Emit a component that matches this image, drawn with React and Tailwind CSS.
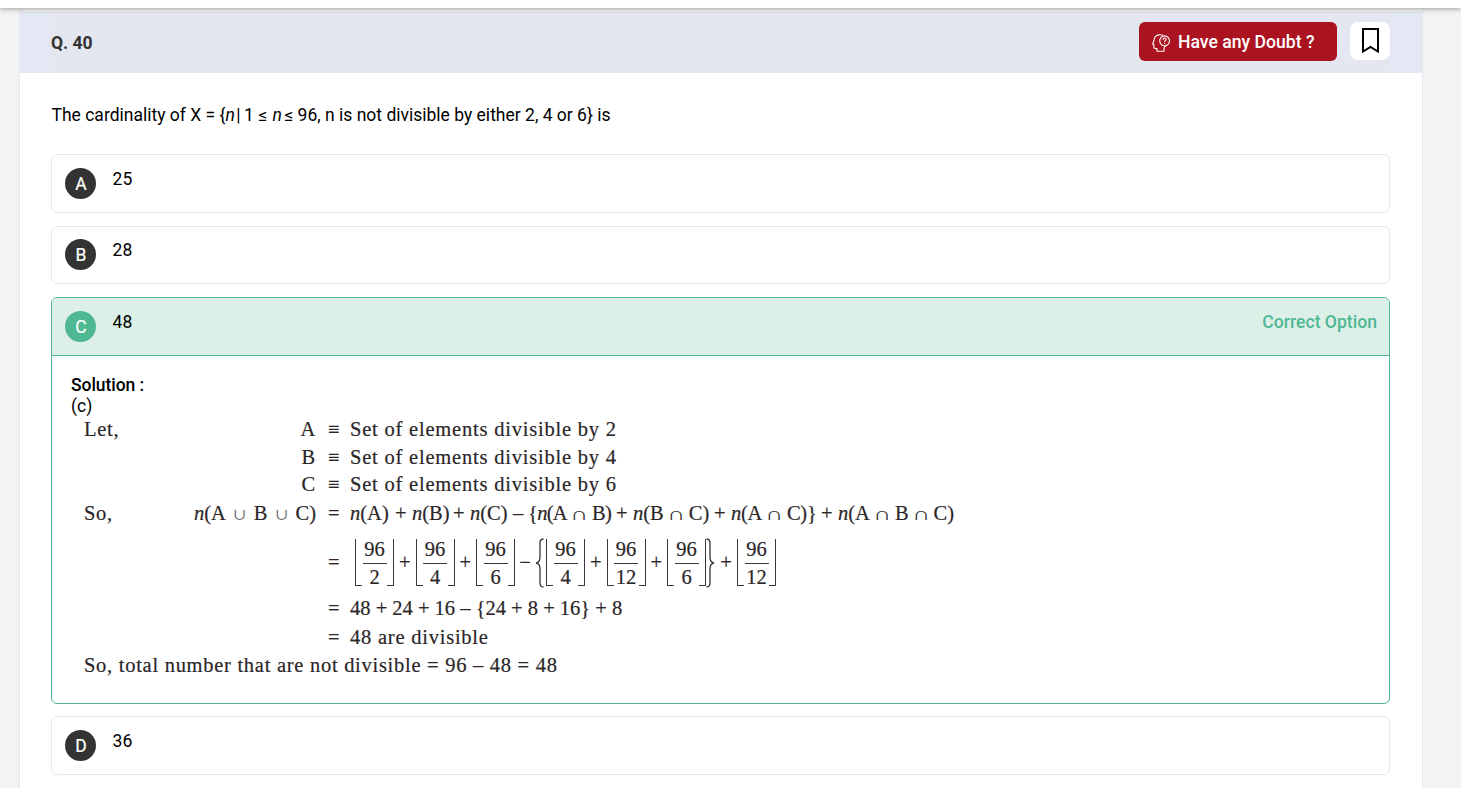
import React from "react";

function Option({ letter, value, className = "", pad = "pt-[13px]" }) {
  return (
    <div className={`flex rounded-md border border-[#e9e9ec] bg-white pl-[13px] ${pad} ${className}`}>
      <Badge letter={letter} className="bg-[#333333]" />
      <span className="ml-[16.6px] mt-px h-[21px] text-[17.5px] leading-[21px]">{value}</span>
    </div>
  );
}

function Badge({ letter, className }) {
  return (
    <span className={`flex size-[31px] shrink-0 items-center justify-center rounded-full text-[17.5px] leading-none text-white [-webkit-text-stroke:0.2px_white] ${className}`}>
      <span className="mt-[3px] pl-px">{letter}</span>
    </span>
  );
}

function N() {
  return <i>n</i>;
}

function Cap() {
  return <span className="mx-[5px] inline-block w-[15px] scale-x-[1.4] text-center text-[18px] leading-none tracking-normal [-webkit-text-stroke:0px]">∩</span>;
}

function Cup() {
  return <span className="mx-[6.5px] inline-block w-[15px] scale-x-[1.25] text-center font-['DejaVu_Sans',sans-serif] text-[18px] leading-none tracking-normal [-webkit-text-stroke:0.7px_white]">∪</span>;
}

function Tok({ className, children }) {
  return <span className={`inline-block shrink-0 whitespace-nowrap ${className}`}>{children}</span>;
}

function Line({ label, lhs, op = "=", children, className = "" }) {
  return (
    <div className={`flex items-center whitespace-nowrap ${className}`}>
      <span className="w-[90px] tracking-[0.7px]">{label}</span>
      <span className="flex w-[142px] justify-end">{lhs}</span>
      <span className="ml-[12px] w-[22px]">{op}</span>
      <span className="flex items-center">{children}</span>
    </div>
  );
}

function Floor({ top, bottom }) {
  return (
    <span className="flex h-[47px] w-[39px] shrink-0 justify-between">
      <span className="w-[7px] border-b border-l border-[#3b3436]" />
      <span className="flex w-[24px] flex-col items-center">
        <span className="h-[24px] text-[20.5px] leading-[20px]">{top}</span>
        <span className="h-px w-full shrink-0 bg-[#3b3436]" />
        <span className="h-[22px] text-[20.5px] leading-[27px]">{bottom}</span>
      </span>
      <span className="w-[7px] border-b border-r border-[#3b3436]" />
    </span>
  );
}

function Gap({ children, className = "w-[21.5px]" }) {
  return <span className={`shrink-0 text-center ${className}`}>{children}</span>;
}

function Brace({ flip }) {
  return (
    <svg className={`h-[50px] w-[9px] shrink-0 ${flip ? "-scale-x-100" : ""}`} viewBox="0 0 9 50" fill="none" stroke="#3b3436" strokeWidth="1.3">
      <path d="M8.5 1 Q5 1 5 5 V19 Q5 24.5 1 25 Q5 25.5 5 31 V45 Q5 49 8.5 49" />
    </svg>
  );
}

export default function App() {
  return (
    <div className="flex h-[788px] w-[1461px] flex-col overflow-hidden bg-[#f3f3f3] font-['Roboto',sans-serif] text-black">
      <div className="relative z-10 h-2 shrink-0 bg-white shadow-[0_1px_5px_rgba(0,0,0,0.35)]" />
      <main className="ml-[19px] flex w-[1404px] grow flex-col border-x border-[#e4e6f2] bg-white">
        <div className="h-1 shrink-0 bg-[#f3f3f3]" />
        <header className="h-[61px] shrink-0 border-t border-[#dddfeb] bg-[#e4e7f4] px-8 pl-[31px]">
          <div className="flex h-[60px] items-start bg-[#e4e7ef]">
            <h1 className="mt-[19px] text-[17.5px] font-bold leading-[23px] text-[#333]">Q. 40</h1>
            <button className="ml-auto mt-[9px] flex h-[39px] w-[198px] items-center rounded-md bg-[#ab1320] pl-[13px] text-white">
              <svg className="mt-[3px] size-[18px]" viewBox="0 0 18 18" fill="none" stroke="currentColor" strokeWidth="1.1" strokeLinecap="round" strokeLinejoin="round">
                <path d="M10.5 1.3C8.4.2 4.4.6 2.9 3.2 2 4.8 2.3 6.5 1.5 8.1L.6 10.1l1.3.7v2.5c0 1 .8 1.4 3.1 1.3v2.6h7v-2.6c0-1.2.7-1.8 1.5-2.6" />
                <circle cx="12.6" cy="6.8" r="4.9" />
                <path d="M11.1 5.5c.1-2 3.1-1.9 3 .1-.1 1.1-1.5 1.1-1.5 2.2" />
                <path d="M12.6 9.4v.1" />
              </svg>
              <span className="ml-[8px] mt-[2px] text-[17.6px] font-medium">Have any Doubt ?</span>
            </button>
            <button className="ml-[13px] mt-[9px] flex h-[38px] w-10 items-center justify-center rounded-lg bg-white">
              <svg className="-mt-px ml-px h-[25px] w-[17px]" viewBox="0 0 17 25" fill="none" stroke="black" strokeWidth="2">
                <path d="M1 1H16V23.5L8.5 19L1 23.5Z" />
              </svg>
            </button>
          </div>
        </header>

        <section className="flex flex-col pl-[31px] pr-8">
          <p className="mt-[31px] h-[50px] whitespace-nowrap pl-[0.5px] text-[17.5px] leading-[22px]">
            The cardinality of X = {"{"}<i>n</i><span className="mx-[1.5px]">|</span><span className="ml-[2px]">1 ≤ </span><i className="ml-[1px]">n</i><span className="ml-[2.5px]">≤ 96, n is not divisible by either 2, 4 or 6{"}"} is</span>
          </p>

          <Option letter="A" value="25" className="h-[59px]" />
          <Option letter="B" value="28" className="mt-[13px] h-[58px]" pad="pt-3" />

          <div className="mt-[13px] h-[407px] rounded-md border border-[#50b794] bg-white">
            <div className="flex h-[58px] rounded-t-[5px] border-b border-[#50b794] bg-[#dcf0e8] pl-[13px] pr-3 pt-[13px]">
              <Badge letter="C" className="bg-[#4eb893]" />
              <span className="ml-[16.6px] mt-px text-[17.5px] leading-[21px]">48</span>
              <span className="ml-auto mt-px text-[17.6px] font-medium leading-[21px] text-[#50b794]">Correct Option</span>
            </div>
            <div className="pl-[19px] pt-[19px] text-[17.5px] leading-[21px]">
              <p className="font-medium tracking-[-0.05px]">Solution :</p>
              <p>(c)</p>
            </div>
            <div className="-mt-px pl-[32px] font-['Palatino_Linotype','Liberation_Serif',serif] text-[20.5px] text-[#2b2628] [-webkit-text-stroke:0.2px]">
              <Line className="h-[27px] tracking-[0.79px]" label="Let," lhs="A" op="≡">Set of elements divisible by 2</Line>
              <Line className="h-[28px] tracking-[0.79px]" lhs="B" op="≡">Set of elements divisible by 4</Line>
              <Line className="h-[27px] tracking-[0.79px]" lhs="C" op="≡">Set of elements divisible by 6</Line>
              <Line className="h-[30px]" label="So," lhs={<span><N />(A<Cup />B<Cup />C)</span>}>
                <Tok className="w-[45px]"><N />(A)</Tok>
                <Tok className="w-[17px]">+</Tok>
                <Tok className="w-[41px]"><N />(B)</Tok>
                <Tok className="w-[17px]">+</Tok>
                <Tok className="w-[43px]"><N />(C)</Tok>
                <Tok className="w-[15px]">–</Tok>
                <Tok className="w-[88px] tracking-[-0.7px]">{"{"}<N />(A<Cap />B)</Tok>
                <Tok className="w-[17px]">+</Tok>
                <Tok className="w-[81px]"><N />(B<Cap />C)</Tok>
                <Tok className="w-[17px]">+</Tok>
                <Tok className="w-[90px] tracking-[-0.3px]"><N />(A<Cap />C){"}"}</Tok>
                <Tok className="w-[17px]">+</Tok>
                <Tok><N />(A<Cap />B<Cap />C)</Tok>
              </Line>
              <Line className="h-[69px]">
                <span className="ml-[5px] flex items-center">
                  <Floor top="96" bottom="2" />
                  <Gap>+</Gap>
                  <Floor top="96" bottom="4" />
                  <Gap>+</Gap>
                  <Floor top="96" bottom="6" />
                  <Gap className="w-[20px]">−</Gap>
                  <Brace />
                  <span className="ml-[2px]" />
                  <Floor top="96" bottom="4" />
                  <Gap>+</Gap>
                  <Floor top="96" bottom="12" />
                  <Gap>+</Gap>
                  <Floor top="96" bottom="6" />
                  <Brace flip />
                  <Gap className="w-[22px]">+</Gap>
                  <Floor top="96" bottom="12" />
                </span>
              </Line>
              <Line className="h-[23px]">48 + 24 + 16 – {"{"}24 + 8 + 16{"}"} + 8</Line>
              <Line className="h-[34px] tracking-[0.77px]">48 are divisible</Line>
              <p className="h-[22px] whitespace-nowrap leading-[22px] tracking-[0.72px]">So, total number that are not divisible = 96 – 48 = 48</p>
            </div>
          </div>

          <Option letter="D" value="36" className="mt-3 h-[59px]" />
        </section>
      </main>
    </div>
  );
}
